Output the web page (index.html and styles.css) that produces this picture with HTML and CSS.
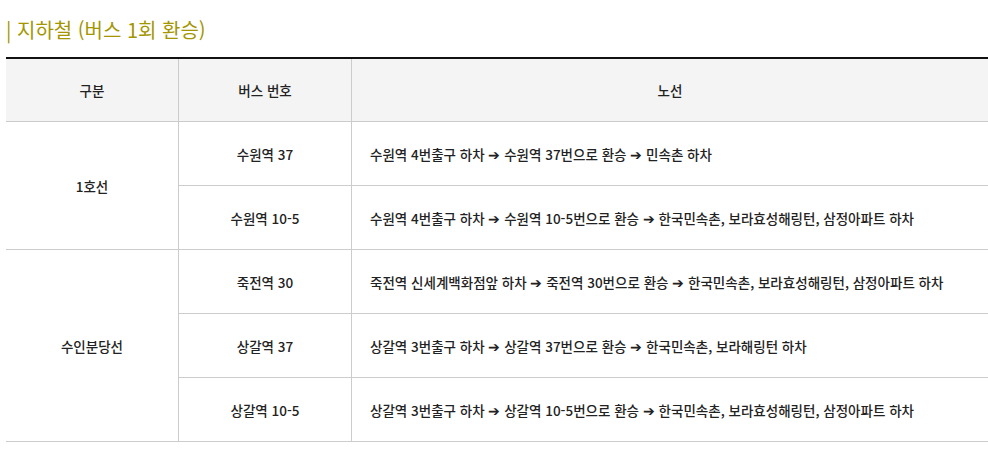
FILE: index.html
```html
<!DOCTYPE html>
<html lang="ko">

<head>
    <meta charset="UTF-8">
    <title>지하철 (버스 1회 환승)</title>
    <link rel="stylesheet" href="styles.css">
</head>

<body>
    <div class="section">
        <h3 class="sub-title">| 지하철 (버스 1회 환승)</h3>

        <table class="route-table">
            <thead>
                <tr>
                    <th class="col-type">구분</th>
                    <th class="col-bus">버스 번호</th>
                    <th>노선</th>
                </tr>
            </thead>
            <tbody>
                <tr>
                    <td rowspan="2">1호선</td>
                    <td>수원역 37</td>
                    <td class="route">수원역 4번출구 하차 ➔ 수원역 37번으로 환승 ➔ 민속촌 하차</td>
                </tr>
                <tr>
                    <td>수원역 10-5</td>
                    <td class="route">수원역 4번출구 하차 ➔ 수원역 10-5번으로 환승 ➔ 한국민속촌, 보라효성해링턴, 삼정아파트 하차</td>
                </tr>
                <tr>
                    <td rowspan="3">수인분당선</td>
                    <td>죽전역 30</td>
                    <td class="route">죽전역 신세계백화점앞 하차 ➔ 죽전역 30번으로 환승 ➔ 한국민속촌, 보라효성해링턴, 삼정아파트 하차</td>
                </tr>
                <tr>
                    <td>상갈역 37</td>
                    <td class="route">상갈역 3번출구 하차 ➔ 상갈역 37번으로 환승 ➔ 한국민속촌, 보라해링턴 하차</td>
                </tr>
                <tr>
                    <td>상갈역 10-5</td>
                    <td class="route">상갈역 3번출구 하차 ➔ 상갈역 10-5번으로 환승 ➔ 한국민속촌, 보라효성해링턴, 삼정아파트 하차</td>
                </tr>
            </tbody>
        </table>
    </div>
</body>

</html>
```

FILE: styles.css
```css
body {
    margin: 0;
    font-family: 'Noto Sans CJK KR', 'Noto Sans', sans-serif;
    color: #222;
    background-color: #fff;
}

.section {
    padding: 0 0 0 6px;
}

.sub-title {
    margin: 0 0 15px 0;
    padding-top: 16px;
    height: 42px;
    box-sizing: border-box;
    font-size: 20px;
    font-weight: 400;
    line-height: 28px;
    color: #a39600;
}

.route-table {
    width: 982px;
    border-collapse: collapse;
    border-top: 2px solid #111;
    font-size: 13.5px;
    font-weight: 500;
}

.route-table th,
.route-table td {
    border: 1px solid #ccc;
    text-align: center;
    padding: 0;
    height: 63px;
}

.route-table th {
    background-color: #f4f4f4;
    font-weight: 500;
    color: #222;
    height: 62px;
    border-bottom: none;
}

.route-table tr > :first-child {
    border-left: none;
}

.route-table tr > :last-child {
    border-right: none;
}

.col-type,
.col-bus {
    width: 172px;
}

.route-table td.route {
    text-align: left;
    padding-left: 18px;
}
```
